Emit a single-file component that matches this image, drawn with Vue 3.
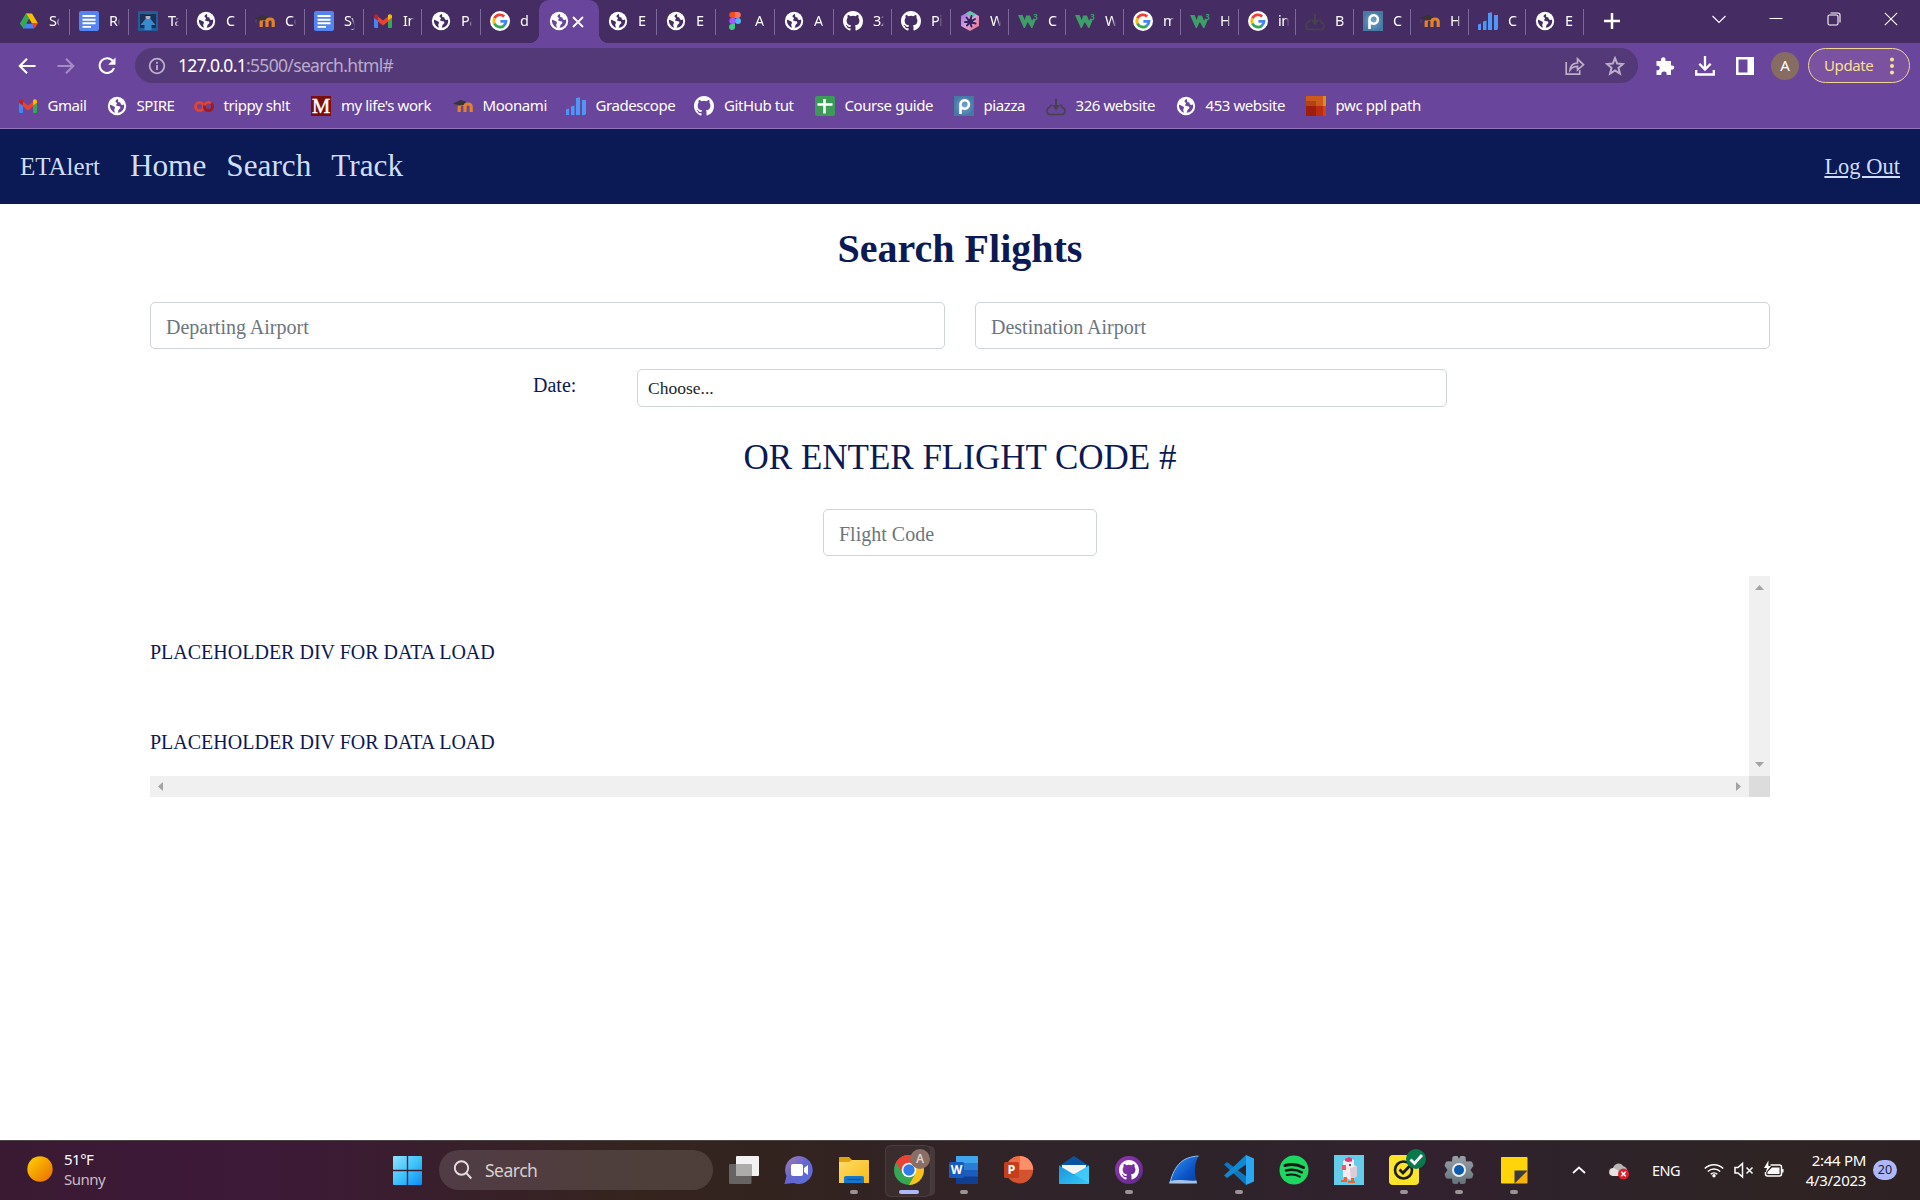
<script setup>
const tabs = [
  { icon: 'drive', text: 'Sc', w: 70 },
  { icon: 'docs', text: 'Re', w: 59 },
  { icon: 'tophat', text: 'Ta', w: 58 },
  { icon: 'globe', text: 'C', w: 59 },
  { icon: 'moodle', text: 'Co', w: 59 },
  { icon: 'docs', text: 'Sy', w: 59 },
  { icon: 'gmail', text: 'In', w: 58 },
  { icon: 'globe', text: 'Pa', w: 59 },
  { icon: 'google', text: 'd', w: 58, last: true },
  { icon: 'globe', active: true, w: 60 },
  { icon: 'globe', text: 'E', w: 58 },
  { icon: 'globe', text: 'E', w: 59 },
  { icon: 'figma', text: 'A', w: 59 },
  { icon: 'globe', text: 'A', w: 59 },
  { icon: 'github', text: '32', w: 58 },
  { icon: 'github', text: 'Pi', w: 59 },
  { icon: 'hexhub', text: 'W', w: 58 },
  { icon: 'w3', text: 'C', w: 57 },
  { icon: 'w3', text: 'W', w: 58 },
  { icon: 'google', text: 'm', w: 57 },
  { icon: 'w3', text: 'H', w: 58 },
  { icon: 'google', text: 'in', w: 57 },
  { icon: 'cloud', text: 'B', w: 58 },
  { icon: 'piazza', text: 'C', w: 57 },
  { icon: 'moodle', text: 'H', w: 58 },
  { icon: 'bars', text: 'C', w: 57 },
  { icon: 'globe', text: 'E', w: 58 },
]

const bookmarks = [
  { icon: 'gmail', text: 'Gmail', w: 89 },
  { icon: 'globe', text: 'SPIRE', w: 87 },
  { icon: 'colab', text: 'trippy sh!t', w: 117.5 },
  { icon: 'mass', text: "my life's work", w: 141.5 },
  { icon: 'moodle', text: 'Moonami', w: 113 },
  { icon: 'bars', text: 'Gradescope', w: 128.5 },
  { icon: 'github', text: 'GitHub tut', w: 120.5 },
  { icon: 'sheets', text: 'Course guide', w: 139 },
  { icon: 'piazza', text: 'piazza', w: 92 },
  { icon: 'cloud', text: '326 website', w: 130 },
  { icon: 'globe', text: '453 website', w: 130 },
  { icon: 'pwc', text: 'pwc ppl path', w: 130 },
]

const apps = [
  { icon: 'taskview' },
  { icon: 'chat' },
  { icon: 'folder', open: true },
  { icon: 'chrome', open: true, current: true },
  { icon: 'word', open: true },
  { icon: 'ppt' },
  { icon: 'mail' },
  { icon: 'ghdesktop', open: true },
  { icon: 'shark' },
  { icon: 'vscode', open: true },
  { icon: 'spotify' },
  { icon: 'chicken' },
  { icon: 'norton', open: true },
  { icon: 'gear', open: true },
  { icon: 'sticky', open: true },
]
</script>

<template>
  <div class="screen">
    <svg class="defs" width="0" height="0" aria-hidden="true">
      <defs>
        <linearGradient id="g-sun" x1="0" y1="0" x2="1" y2="1"><stop offset="0" stop-color="#ffd400" /><stop offset="1" stop-color="#ea6a00" /></linearGradient>
        <linearGradient id="g-win" x1="0" y1="0" x2="1" y2="1"><stop offset="0" stop-color="#8fe2ff" /><stop offset=".5" stop-color="#3fc4fb" /><stop offset="1" stop-color="#0a8cf5" /></linearGradient>
        <linearGradient id="g-chat" x1="0" y1="0" x2="1" y2="1"><stop offset="0" stop-color="#a67bb5" /><stop offset=".5" stop-color="#6466cf" /><stop offset="1" stop-color="#5a6fd6" /></linearGradient>
        <linearGradient id="g-folder" x1="0" y1="0" x2="1" y2="1"><stop offset="0" stop-color="#ffdc6a" /><stop offset="1" stop-color="#f9b914" /></linearGradient>
        <linearGradient id="g-mail" x1="0" y1="0" x2="1" y2="1"><stop offset="0" stop-color="#1b93e0" /><stop offset="1" stop-color="#35c8f6" /></linearGradient>
        <linearGradient id="g-shark" x1="0" y1="0" x2="1" y2="1"><stop offset="0" stop-color="#3f95f2" /><stop offset=".6" stop-color="#0c55c8" /><stop offset="1" stop-color="#0b3a94" /></linearGradient>
        <linearGradient id="g-hex" x1="0" y1="0" x2="1" y2="1"><stop offset="0" stop-color="#8c6be0" /><stop offset=".5" stop-color="#dca4dd" /><stop offset="1" stop-color="#ef6a7d" /></linearGradient>
        <linearGradient id="g-gear" x1="0" y1="0" x2="0" y2="1"><stop offset="0" stop-color="#98a1a8" /><stop offset="1" stop-color="#66717a" /></linearGradient>
        <linearGradient id="g-gh" x1="0" y1="0" x2="1" y2="1"><stop offset="0" stop-color="#9535b5" /><stop offset="1" stop-color="#5e2a88" /></linearGradient>
        <radialGradient id="g-piazza"><stop offset="0" stop-color="#73a6cb" /><stop offset="1" stop-color="#4879a5" /></radialGradient>

        <symbol id="drive" viewBox="0 0 20 20">
          <path fill="#34a853" d="M7 2.500h3v6L5 17.500 1 12.500z" />
          <path fill="#fbbc04" d="M7 2.500h6l6 10h-6z" />
          <path fill="#4285f4" d="M5 12.500h9L15 17.500H4z" />
          <path fill="#ea4335" d="M13 12.500h6L15.500 17.500z" />
          <path fill="#34a853" d="M7 2.500l3.200 5L4.500 17.500 1 12.500z" />
          <path fill="#452c63" d="M10 8l2.500 4.500h-5z" />
        </symbol>
        <symbol id="docs" viewBox="0 0 20 20">
          <rect width="20" height="20" rx="2" fill="#5384ef" />
          <path stroke="#fff" stroke-width="1.900" d="M3.500 5h13M3.500 8.700h13M3.500 12.300h13M3.500 15.900h8.500" />
        </symbol>
        <symbol id="tophat" viewBox="0 0 20 20">
          <rect width="20" height="20" rx="1" fill="#245c9c" />
          <path fill="#1d3157" d="M2 3h5v14H2zM13 3h5v14h-5z" />
          <path fill="#3a8bce" d="M7.500 8h5l5 6h-4v5h-7v-5h-4z" />
          <circle cx="10" cy="6" r="2.300" fill="#b8b6bd" />
          <path fill="#222" d="M7 3.500h6V5H7z" />
        </symbol>
        <symbol id="globe" viewBox="0 0 20 20">
          <circle cx="10" cy="10" r="9.200" fill="#fff" />
          <path fill="var(--tab, #452c63)" d="M10.800 2.900c-1.200.4-2.400 1.500-2.300 2.600.1 1 1.200.8 1.500 1.600.3.900-1.100 1.300-.7 2.300.4.900 1.900.4 2.900.8 1 .4 1.400 1.200 1 2-.4.900-1.600 1-1.800 2.100-.1.800-.3 1.600-.8 2.400 3.800-.2 6.600-3.300 6.600-6.800 0-.5-.1-.9-.2-1.400-.9.600-2.100.6-2.900 0-.8-.6-.2-1.500-.8-2.100-.5-.5-1.400.1-1.900-.5-.6-.8.200-2-.6-3zM3 8.800c1.400.1 2.800 1 4.200 1.700 1 .5.900 1.600.3 2.400-.6.800-.1 1.700.2 2.800l.2 1C4.800 15.700 2.500 12.200 3 8.800z" />
        </symbol>
        <symbol id="moodle" viewBox="0 0 20 20">
          <path fill="none" stroke="#e0832c" stroke-width="3.200" d="M6.200 16V10.500M6.200 11.500C6.200 9 8 8 9.400 8S12 9 12 11v5M12 11c0-2 1.600-3 3.200-3s3 1 3 3v5" />
          <path fill="#373339" d="M0 7.500L7.500 4 13 5.500 10.500 9 6 9.500z" />
          <path stroke="#555" stroke-width=".8" d="M1 8v4" />
        </symbol>
        <symbol id="gmail" viewBox="0 0 20 20">
          <path fill="#4285f4" d="M1 6.500l4 3V17H2.500C1.500 17 1 16.500 1 15.700z" />
          <path fill="#34a853" d="M15 9.500l4-3v9.200c0 .8-.5 1.300-1.500 1.300H15z" />
          <path fill="#ea4335" d="M4 4.800l6 4.700 6-4.700v5l-6 4.600-6-4.600z" />
          <path fill="#c5221f" d="M1 5.500C1 3 3.500 2.600 5 4v5.600L1 6.700z" />
          <path fill="#fbbc04" d="M19 5.500C19 3 16.500 2.600 15 4v5.600l4-2.900z" />
        </symbol>
        <symbol id="google" viewBox="0 0 20 20">
          <circle cx="10" cy="10" r="10" fill="#fff" />
          <g fill="none" stroke-width="2.800">
            <path stroke="#ea4335" d="M14.200 5.500A6.100 6.100 0 0 0 4.500 7.300" />
            <path stroke="#fbbc04" d="M4.600 7.100a6.100 6.100 0 0 0 0 5.800" />
            <path stroke="#34a853" d="M4.500 12.700a6.100 6.100 0 0 0 9.500 1.900" />
            <path stroke="#4285f4" d="M13.800 14.700A6 6 0 0 0 16 10.300h-5.600" />
          </g>
        </symbol>
        <symbol id="figma" viewBox="0 0 20 20">
          <path fill="#f24e1e" d="M10 1H7.200a3 3 0 0 0 0 6H10z" />
          <path fill="#ff7262" d="M10 1h2.800a3 3 0 0 1 0 6H10z" />
          <path fill="#a259ff" d="M10 7H7.200a3 3 0 0 0 0 6H10z" />
          <circle cx="13" cy="10" r="3" fill="#4fb5f7" />
          <path fill="#3ecf7e" d="M10 13H7.200a3 3 0 1 0 2.800 3z" />
        </symbol>
        <symbol id="github" viewBox="0 0 16 16">
          <path fill="#fff" d="M8 0C3.580 0 0 3.580 0 8c0 3.540 2.290 6.530 5.470 7.590.4.070.55-.17.55-.38 0-.19-.01-.82-.01-1.490-2.010.37-2.530-.49-2.690-.94-.09-.23-.48-.94-.82-1.130-.28-.15-.68-.52-.01-.53.63-.01 1.080.58 1.230.82.72 1.210 1.870.87 2.330.66.070-.52.28-.87.51-1.070-1.780-.2-3.640-.89-3.640-3.950 0-.87.31-1.590.82-2.150-.08-.2-.36-1.020.08-2.120 0 0 .67-.21 2.200.82a7.600 7.600 0 0 1 4 0c1.530-1.040 2.200-.82 2.200-.82.44 1.100.16 1.920.08 2.120.51.56.82 1.270.82 2.150 0 3.070-1.870 3.750-3.650 3.950.29.25.54.73.54 1.480 0 1.070-.01 1.930-.01 2.200 0 .21.15.46.55.38A8 8 0 0 0 16 8c0-4.420-3.580-8-8-8z" />
        </symbol>
        <symbol id="hexhub" viewBox="0 0 20 20">
          <path fill="url(#g-hex)" d="M10 0l9 5v10l-9 5-9-5V5z" />
          <path fill="#63c7b0" d="M10 0l6 3.300-3 3L6 2.300z" />
          <path stroke="#34235e" stroke-width="2" stroke-linecap="round" d="M10 11L6.500 6.500M10 10l1.500-5M10 11l5-3M10 11H5M10 11l5.500 1.500M10 11l-3 3.500M10 11l1.500 4.500" />
          <circle cx="10.300" cy="10.500" r="2.800" fill="#34235e" />
        </symbol>
        <symbol id="w3" viewBox="0 0 20 20">
          <path fill="#3f9d69" d="M0 4h4.500l2.300 5L8 4.500h4l2 5 1.800-2.300 1.700 2.300-3.200 7.500h-1L9.800 11l-3 6h-1z" />
          <text x="15.300" y="8.500" font-family="Open Sans, sans-serif" font-size="8" font-weight="700" fill="#3f9d69">3</text>
        </symbol>
        <symbol id="cloud" viewBox="0 0 20 20">
          <path fill="none" stroke="#47434c" stroke-width="1.600" d="M6 9c-2 0-2 1-2.200 2C-.3 12.500.3 18.300 4 18.500h12c4-.5 4-6 .2-7C16 9.500 15 9 14 9" />
          <path fill="none" stroke="#47434c" stroke-width="2" d="M10 3v10" />
          <path fill="#47434c" d="M6 9h8l-4 5.500z" />
        </symbol>
        <symbol id="piazza" viewBox="0 0 20 20">
          <rect width="20" height="20" fill="url(#g-piazza)" />
          <path fill="none" stroke="#fff" stroke-width="2.600" d="M6.500 18V8a4.200 4.200 0 1 1 4.300 4.700c-2 0-3-.7-4-1.700" />
        </symbol>
        <symbol id="bars" viewBox="0 0 20 20">
          <path fill="#4f96f6" d="M0 13.500l3-1V19H0zM5 10.500l3.500-1V19H5zM10 2l4-.8V19h-4zM16 4h4v13.500l-1 1.500h-3z" />
        </symbol>
        <symbol id="colab" viewBox="0 0 20 20">
          <circle cx="5.500" cy="10.500" r="4" fill="none" stroke="#de4333" stroke-width="3" />
          <circle cx="14.500" cy="10.500" r="4" fill="none" stroke="#a31a1b" stroke-width="3" />
          <path fill="none" stroke="#de4333" stroke-width="3" d="M10.500 9.500a4 4 0 0 1 6.500-2.200" />
        </symbol>
        <symbol id="mass" viewBox="0 0 20 20">
          <rect width="20" height="20" fill="#7c0d0c" />
          <text x="10" y="17" text-anchor="middle" font-family="Liberation Serif, serif" font-size="20.500" fill="#fff" stroke="#fff" stroke-width=".5">M</text>
        </symbol>
        <symbol id="sheets" viewBox="0 0 20 20">
          <rect width="20" height="20" rx="2" fill="#3c9c57" />
          <path stroke="#fff" stroke-width="2.600" d="M2.500 8.500h15M9.500 3v14.500" />
        </symbol>
        <symbol id="pwc" viewBox="0 0 20 20">
          <path fill="#cc5a18" d="M0 0h20v20H0z" />
          <path fill="#b34313" d="M0 5h10v5H0z" />
          <path fill="#9c1f0d" d="M0 10h10v10H0z" />
          <path fill="#bb2b10" d="M10 10h7v10h-7z" />
          <path fill="#dd8b22" d="M17 0h3v10h-3z" />
          <path fill="#cf4217" d="M17 10h3v10h-3z" />
        </symbol>

        <symbol id="taskview" viewBox="0 0 30 30">
          <rect x="7" y="1" width="23" height="20" rx="1" fill="#f2f2f2" />
          <rect x="0" y="9" width="22.500" height="20" rx="1" fill="#656463" />
          <rect x="7" y="9" width="15.500" height="12" fill="#adacab" />
        </symbol>
        <symbol id="chat" viewBox="0 0 30 30">
          <path fill="url(#g-chat)" d="M15 1a14 14 0 1 1-5.500 27L.5 29l2-8A14 14 0 0 1 15 1z" />
          <rect x="7" y="9" width="12" height="12" rx="2" fill="#fff" />
          <path fill="#fff" d="M20 13l4-3v10l-4-3z" />
        </symbol>
        <symbol id="folder" viewBox="0 0 30 30">
          <path fill="#e0a30c" d="M0 3c0-.7.300-1 1-1h9l3 3v5H0z" />
          <path fill="url(#g-folder)" d="M0 7h10l3-2h16c.6 0 1 .4 1 1v22H0z" />
          <path fill="#1377cb" d="M5 28v-5c0-1.200.8-2 2-2h16c1.200 0 2 .8 2 2v5z" />
          <path stroke="#0b4d93" stroke-width="1.200" d="M8.500 24.500h13" />
        </symbol>
        <symbol id="chrome" viewBox="0 0 30 30">
          <circle cx="15" cy="15" r="15" fill="#34a853" />
          <path fill="#ea4335" d="M15 15L2 7.500A15 15 0 0 1 28 7.500z" />
          <path fill="#ea4335" d="M2 7.500L8.500 18.700 15 8h13A15 15 0 0 0 2 7.500z" />
          <path fill="#fbc116" d="M15 8h13.200A15 15 0 0 1 15 30l6.500-11.500z" />
          <circle cx="15" cy="15" r="7.300" fill="#fff" />
          <circle cx="15" cy="15" r="5.700" fill="#2f7de9" />
        </symbol>
        <symbol id="word" viewBox="0 0 30 30">
          <rect x="7" y="1" width="22" height="27.500" rx="1" fill="#1a5dbe" />
          <path fill="#41a5ee" d="M7 8V2c0-.6.400-1 1-1h20c.6 0 1 .4 1 1v6z" />
          <path fill="#2b7cd3" d="M7 8h22v7H7z" />
          <path fill="#103f91" d="M7 21.500h22v7H7z" />
          <rect y="7" width="15" height="16" rx="1.500" fill="#185abd" />
          <text x="7.500" y="19.300" text-anchor="middle" font-family="Open Sans, sans-serif" font-weight="700" font-size="12" fill="#fff">W</text>
        </symbol>
        <symbol id="ppt" viewBox="0 0 30 30">
          <circle cx="15.500" cy="14.700" r="13.700" fill="#d35230" />
          <path fill="#ff8f6b" d="M15.500 14.700V1a13.700 13.700 0 0 1 13.700 13.700z" />
          <path fill="#ed6c47" d="M15.500 14.700V1A13.700 13.700 0 0 0 1.800 14.700z" />
          <rect y="7" width="15" height="16" rx="1.500" fill="#c43e1c" />
          <text x="7.500" y="19.300" text-anchor="middle" font-family="Open Sans, sans-serif" font-weight="700" font-size="12.500" fill="#fff">P</text>
        </symbol>
        <symbol id="mail" viewBox="0 0 30 30">
          <path fill="#0a55a2" d="M0 11L15 1l15 10v6H0z" />
          <path fill="#f4f4f4" d="M3 10h24v9H3z" />
          <path fill="url(#g-mail)" d="M0 10.500l15 9 15-9V28c0 .6-.4 1-1 1H1c-.6 0-1-.4-1-1z" />
          <path fill="#47d2f8" d="M15 19.500l15-9V28z" opacity=".7" />
        </symbol>
        <symbol id="ghdesktop" viewBox="0 0 30 30">
          <circle cx="15" cy="15" r="14" fill="url(#g-gh)" />
          <use href="#github" x="5" y="5" width="20" height="20" />
        </symbol>
        <symbol id="shark" viewBox="0 0 30 30">
          <path fill="url(#g-shark)" d="M29.500 1C14 2 6 9 1 27.500c6 1.500 20 1.500 27 0C25 18 25 9 29.500 1z" />
          <path fill="none" stroke="#8ec0f2" stroke-width="1" d="M29.500 1C14 2 6 9 1 27.500" />
          <path fill="#a7c4e6" d="M1 26c9-2.500 17 .5 26.500-.5l.5 3H0z" />
        </symbol>
        <symbol id="vscode" viewBox="0 0 30 30">
          <path fill="#0b78c1" d="M0 9.500l3-2.500 20 15-1 8z" />
          <path fill="#1188cf" d="M0 20.500L22 0l2 8L3 23z" />
          <path fill="#29a7f3" d="M22 0l8 3.500v23L22 30z" />
        </symbol>
        <symbol id="spotify" viewBox="0 0 30 30">
          <circle cx="15" cy="15" r="14.500" fill="#1ed760" />
          <g fill="none" stroke="#131a15" stroke-linecap="round">
            <path stroke-width="3" d="M6 10.500c6-1.700 13-1 18.500 2" />
            <path stroke-width="2.500" d="M7 15.500c5.500-1.400 11-.8 15.800 1.800" />
            <path stroke-width="2" d="M7.800 20c4.500-1 9-.6 13 1.700" />
          </g>
        </symbol>
        <symbol id="chicken" viewBox="0 0 30 30">
          <rect width="30" height="30" fill="#64cdea" />
          <path fill="#f6e9ef" d="M9 6l5-3 6 2v5l3 2v9l-6 4-8-3z" />
          <path fill="#dccbd9" d="M16 13l7-2v10l-6 4z" />
          <path fill="#e63a77" d="M11 4l4-2 3 1.500v3L14 7l-3-1z" />
          <path fill="#ec5a6b" d="M8 10h4v5H8z" />
          <path fill="#e9652f" d="M10 22h3v3h-3zM17 23h3v3h-3zM7 25h6v2H7zM14 26h7v2h-7z" />
          <circle cx="16" cy="10" r="1" fill="#272027" />
        </symbol>
        <symbol id="norton" viewBox="0 0 30 30">
          <rect width="30" height="30" rx="4" fill="#fde428" />
          <circle cx="14.500" cy="15" r="8.500" fill="none" stroke="#1b1b17" stroke-width="2.600" />
          <path fill="none" stroke="#1b1b17" stroke-width="2.800" d="M10.500 14.500l3.500 3.500 8-8.500" />
        </symbol>
        <symbol id="gear" viewBox="0 0 30 30">
          <path fill="url(#g-gear)" d="M10.500 1h3l1.500 2.800L16.500 1h3l2 .8.500 4.700 3.500-.2L28 6.800l1.500 4L26.500 15l3 4.200-1.500 4-2.500.5-3.500-.2-.5 4.700-2 .8h-3L15 26.200 13.500 29h-3l-2-.8L8 23.500l-3.500.2L2 23.200l-1.500-4L3.500 15l-3-4.200 1.500-4 2.500-.5L8 6.500l.5-4.700z" />
          <circle cx="15" cy="15" r="7" fill="#e9eef1" />
          <circle cx="15" cy="15" r="5" fill="#0b5cad" />
        </symbol>
        <symbol id="sticky" viewBox="0 0 30 30">
          <path fill="#ffd50a" d="M2 3c0-.6.400-1 1-1h24.500c.6 0 1 .4 1 1v12.500L15.500 28.500H3c-.6 0-1-.4-1-1z" />
          <path fill="#f5b20a" d="M28.500 15.500v12c0 .6-.4 1-1 1h-12z" />
          <path fill="#3c3b42" d="M15.500 15.500h13l-13 13z" />
        </symbol>
      </defs>
    </svg>

    <header class="browser">
      <div class="tabstrip">
        <div v-for="(t, i) in tabs" :key="i" class="tab" :class="{ active: t.active, bare: t.last }" :style="{ width: t.w + 'px' }">
          <svg class="fav"><use :href="'#' + t.icon" /></svg>
          <svg v-if="t.active" class="tab-close" viewBox="0 0 12 12"><path d="M1 1l10 10M11 1L1 11" /></svg>
          <span v-else class="tab-text">{{ t.text }}</span>
        </div>
        <svg class="plus" viewBox="0 0 16 16"><path d="M8 0v16M0 8h16" /></svg>
        <div class="win-controls">
          <svg viewBox="0 0 14 14"><path d="M.500 4l6.500 6.500L13.500 4" /></svg>
          <svg viewBox="0 0 14 14"><path d="M.500 6.500h13" /></svg>
          <svg viewBox="0 0 14 14"><rect x="1" y="3" width="10" height="10" rx="1.500" /><path d="M3.500 1H11q2 0 2 2v7.500" /></svg>
          <svg viewBox="0 0 14 14"><path d="M.800.800l12.400 12.400M13.200.800L.800 13.200" /></svg>
        </div>
      </div>

      <div class="toolbar">
        <svg class="nav-ico" viewBox="0 0 20 20"><path d="M18.500 10H3.500M10 2.700L2.800 10l7.200 7.300" /></svg>
        <svg class="nav-ico dim" viewBox="0 0 20 20"><path d="M1.500 10h15M10 2.700l7.200 7.300-7.200 7.300" /></svg>
        <svg class="nav-ico reload" viewBox="0 0 20 20"><path d="M16 5.200A7.400 7.400 0 1 0 17 12.200" /><path class="fill" d="M18.500 1.500v7.300h-7.300z" /></svg>
        <div class="omnibox">
          <svg class="info" viewBox="0 0 18 18"><circle cx="9" cy="9" r="7.300" /><path d="M9 8v5M9 4.800v2" /></svg>
          <span class="url"><b>127.0.0.1</b>:5500/search.html#</span>
          <svg class="share" viewBox="0 0 20 20"><path d="M1.200 6v12.200h13.500v-4M5 14c.5-4.500 3-6.800 7.500-7V2.800l6 6-6 5.200v-3.600c-3.500 0-5.500 1-7.500 3.600z" /></svg>
          <svg class="star" viewBox="0 0 20 20"><path d="M10 2.200l2.200 5.400 5.700.4-4.400 3.800 1.400 5.700-4.900-3.100-4.900 3.100 1.400-5.700L2.100 8l5.700-.4z" /></svg>
        </div>
        <div class="actions">
          <svg viewBox="0 0 20 20"><path fill="#fff" d="M1.500 5h4.700C5.600 2.600 6.600 1.200 8.300 1.200S11 2.600 10.400 5H16v4.600c2-.5 3.300.5 3.300 2s-1.300 2.600-3.300 2V19h-4.300c.4-2.300-.8-3.400-2.600-3.400S6 16.700 6.300 19H1.500v-4.800c2 .3 3.200-.7 3.200-2.300S3.500 9.500 1.500 9.800z" /></svg>
          <svg viewBox="0 0 20 20"><path fill="none" stroke="#fff" stroke-width="2.300" d="M10 0v13M4.300 7.700l5.700 5.800 5.700-5.800M1.200 14v4.500h17.600V14" /></svg>
          <svg viewBox="0 0 20 20"><path fill="#fff" fill-rule="evenodd" d="M1 1h18v18H1zM3.500 3.500v13h9v-13z" /></svg>
        </div>
        <div class="avatar">A</div>
        <div class="update"><span>Update</span><i></i></div>
      </div>

      <div class="bookmarks">
        <div v-for="b in bookmarks" :key="b.text" class="bookmark" :style="{ width: b.w + 'px' }">
          <svg><use :href="'#' + b.icon" /></svg><span>{{ b.text }}</span>
        </div>
      </div>
    </header>

    <nav class="site-nav">
      <a class="brand">ETAlert</a>
      <a class="link">Home</a>
      <a class="link">Search</a>
      <a class="link">Track</a>
      <a class="logout">Log Out</a>
    </nav>

    <main class="page">
      <h1>Search Flights</h1>
      <div class="row">
        <input type="text" placeholder="Departing Airport" />
        <input type="text" placeholder="Destination Airport" />
      </div>
      <div class="date-row">
        <label>Date:</label>
        <div class="select">Choose...</div>
      </div>
      <h2>OR ENTER FLIGHT CODE #</h2>
      <input class="code" type="text" placeholder="Flight Code" />
      <div class="scroller">
        <div class="results">
          <p>PLACEHOLDER DIV FOR DATA LOAD</p>
          <p>PLACEHOLDER DIV FOR DATA LOAD</p>
        </div>
        <div class="vbar">
          <svg width="9" height="5"><path d="M4.500 0L9 5H0z" /></svg>
          <svg width="9" height="5"><path d="M0 0h9L4.500 5z" /></svg>
        </div>
        <div class="hbar">
          <svg width="5" height="9"><path d="M5 0v9L0 4.500z" /></svg>
          <svg width="5" height="9"><path d="M0 0l5 4.500L0 9z" /></svg>
        </div>
        <div class="corner"></div>
      </div>
    </main>

    <footer class="taskbar">
      <div class="weather">
        <svg width="26" height="26" viewBox="0 0 26 26"><circle cx="13" cy="13" r="12.700" fill="url(#g-sun)" /></svg>
        <div><p class="temp">51°F</p><p class="sky">Sunny</p></div>
      </div>
      <svg class="start" viewBox="0 0 30 30"><path fill="url(#g-win)" d="M1 0h13.300v14.300H0V1q0-1 1-1zM15.700 0H29q1 0 1 1v13.300H15.700zM0 15.700h14.300V30H1q-1 0-1-1zM15.700 15.700H30V29q0 1-1 1H15.700z" /></svg>
      <div class="searchbox">
        <svg viewBox="0 0 20 20"><circle cx="8.500" cy="8" r="6.700" /><path d="M13.300 13l5 5.500" /></svg>
        <span>Search</span>
      </div>
      <div class="apps">
        <div v-for="a in apps" :key="a.icon" class="app" :class="{ current: a.current }">
          <svg><use :href="'#' + a.icon" /></svg>
          <span v-if="a.icon === 'chrome'" class="badge profile">A</span>
          <span v-if="a.icon === 'norton'" class="badge ok"><svg viewBox="0 0 20 20"><path d="M4.500 10.500l4 4 7.500-8.500" /></svg></span>
          <i v-if="a.open"></i>
        </div>
      </div>
      <div class="tray">
        <svg class="t-chev" viewBox="0 0 14 8"><path d="M1 7l6-5.500L13 7" /></svg>
        <svg class="t-cloud" viewBox="0 0 20 18">
          <path fill="#b9b6b6" d="M4 14a4 4 0 0 1 0-8c1-4 7-6.500 10-2 3 1 5 3 4 7l-3 3z" />
          <path fill="#e6e3e3" d="M1 12c-1-3 1-6 4-6l8 5-5 3H4z" />
          <circle cx="14.500" cy="12" r="5.500" fill="#e01f2b" /><path stroke="#fff" stroke-width="1.500" d="M12.300 9.800l4.400 4.400M16.700 9.800l-4.400 4.400" />
        </svg>
        <span class="lang">ENG</span>
        <svg class="t-ico wifi" viewBox="0 0 20 20"><path d="M.800 8.500a13.200 13.200 0 0 1 18.400 0M3.800 11.500a9 9 0 0 1 12.400 0M6.700 14.200a4.800 4.800 0 0 1 6.600 0" /><circle cx="10" cy="15.800" r="1.700" fill="#fff" stroke="none" /></svg>
        <svg class="t-ico" viewBox="0 0 20 20"><path d="M1 7.500h3L8.500 3.500v13.500L4 13H1zM12.500 7.500l6 6M18.500 7.500l-6 6" /></svg>
        <svg class="t-ico bat" viewBox="0 0 20 20"><path d="M6.500 5h9q2 0 2 2v7q0 2-2 2h-12q-2 0-2-2v-2M18.800 9v3.500" /><path fill="#fff" stroke="none" d="M8 7.500h7.500v6.500h-12v-2zM4.500.500L0 8h3L1.500 13 7 6H4.300z" /></svg>
        <div class="clock"><p>2:44 PM</p><p>4/3/2023</p></div>
        <span class="count">20</span>
      </div>
    </footer>
  </div>
</template>

<style>
body { margin: 0; background: #fff; }
</style>

<style scoped>
* { box-sizing: border-box; }
p, h1, h2 { margin: 0; }
svg { display: block; flex: none; }
.screen { width: 1920px; height: 1200px; display: flex; flex-direction: column; overflow: hidden; background: #fff; font-family: "Noto Sans", "Open Sans", sans-serif; }
.defs { position: absolute; }

.browser { height: 129px; background: #6a459c; border-bottom: 1px solid #9277b8; color: #fff; flex: none; }
.tabstrip { height: 43px; background: #452c63; display: flex; align-items: flex-start; }
.tab { height: 43px; display: flex; align-items: center; padding-left: 9px; position: relative; flex: none; }
.tab::after { content: ""; position: absolute; right: 0; top: 9px; width: 1px; height: 26px; background: #7c689a; }
.tab:first-child { padding-left: 19px; }
.tab.bare::after, .tab.active::after { display: none; }
.fav { width: 20px; height: 20px; margin-top: -1px; }
.tab-text { margin: -3px 0 0 10px; width: 11px; overflow: hidden; white-space: nowrap; font-size: 14.500px; letter-spacing: -.5px; line-height: 22px; mask-image: linear-gradient(90deg, #000 65%, transparent); }
.tab.active { --tab: #6a459c; background: #6a459c; border-radius: 10px 10px 0 0; padding-left: 10px; }
.tab.active::before { content: ""; position: absolute; left: -10px; right: -10px; bottom: 0; height: 10px; background: radial-gradient(circle at 0 0, transparent 10px, #6a459c 10.500px) left / 10px 10px no-repeat, radial-gradient(circle at 100% 0, transparent 10px, #6a459c 10.500px) right / 10px 10px no-repeat; }
.tab-close { width: 12px; height: 12px; margin-left: 3px; fill: none; stroke: #fff; stroke-width: 1.800; }
.plus { width: 16px; height: 16px; margin: 13px 0 0 20px; stroke: #fff; stroke-width: 2.500; }
.win-controls { margin: 12px 22px 0 auto; display: flex; gap: 43.300px; }
.win-controls svg { width: 14px; height: 14px; fill: none; stroke: #fff; stroke-width: 1.100; }

.toolbar { height: 43px; display: flex; align-items: center; padding: 2px 10px 0 17px; }
.nav-ico { width: 20px; height: 20px; margin-right: 19px; fill: none; stroke: #fff; stroke-width: 2.100; }
.nav-ico.dim { stroke: #a48cc5; }
.nav-ico.reload { margin: 0 18px 0 2px; }
.nav-ico .fill { fill: #fff; stroke: none; }
.omnibox { width: 1503px; height: 35px; border-radius: 18px; background: #543979; display: flex; align-items: center; padding: 0 13px 0 13px; }
.info { width: 18px; height: 18px; fill: none; stroke: #bcb0c9; stroke-width: 1.800; }
.url { margin-left: 12px; font-size: 17.500px; letter-spacing: -.68px; line-height: 24px; color: #b9acc8; margin-top: -1px; }
.url b { font-weight: 400; color: #fff; }
.share, .star { width: 20px; height: 20px; fill: none; stroke: #bcb0c9; stroke-width: 1.700; }
.share { margin-left: auto; }
.star { margin-left: 20px; stroke-width: 2; }
.actions { display: flex; gap: 20px; margin-left: 17px; }
.actions svg { width: 20px; height: 20px; }
.avatar { width: 28px; height: 28px; border-radius: 50%; background: #876c61; font-size: 15px; line-height: 27px; text-align: center; margin-left: 16px; }
.update { margin-left: auto; width: 102px; height: 35px; border: 1.500px solid #f1d594; border-radius: 18px; background: #7a529f; color: #fbdf96; font-size: 15px; letter-spacing: -.4px; display: flex; align-items: center; padding: 0 15px; justify-content: space-between; }
.update span { margin-top: -2px; }
.update i { width: 4px; height: 4px; border-radius: 50%; background: #fbdf96; box-shadow: 0 -6.500px #fbdf96, 0 6.500px #fbdf96; }

.bookmarks { height: 40px; display: flex; align-items: center; padding-left: 17.500px; --tab: #6a459c; }
.bookmark { display: flex; align-items: center; gap: 10px; flex: none; font-size: 15px; letter-spacing: -.42px; white-space: nowrap; line-height: 22px; }
.bookmark svg { width: 20px; height: 20px; }
.bookmark span { margin-top: -2px; }

.site-nav { height: 75px; flex: none; background: #0b1954; color: #cfdef8; display: flex; align-items: center; padding: 0 20px; font-family: "Liberation Serif", serif; }
.brand { font-size: 25px; margin: 0 30px 0 0; }
.link { font-size: 31.250px; margin-right: 20px; margin-top: -2px; }
.logout { margin-left: auto; font-size: 22.500px; text-decoration: underline; }

.page { flex: 1; width: 1620px; margin: 0 auto; padding-top: 21px; display: flex; flex-direction: column; align-items: center; color: #0b1954; font-family: "Liberation Serif", serif; font-size: 20px; line-height: 30px; }
h1 { font-size: 40px; line-height: 48px; font-weight: 700; }
.row { display: flex; gap: 30px; width: 100%; margin-top: 29px; }
input { height: 47px; border: 1px solid #ced4da; border-radius: 5px; background: #fff; padding: 3px 15px 0; font: 20px "Liberation Serif", serif; flex: 1; min-width: 0; outline: none; }
input::placeholder { color: #6c757d; opacity: 1; }
.date-row { display: flex; align-self: flex-start; margin: 20px 0 0 383px; height: 38px; }
label { width: 104px; padding-top: 1px; }
.select { width: 810px; height: 38px; border: 1px solid #ced4da; border-radius: 5px; color: #212529; font-size: 17.500px; line-height: 36px; padding-left: 10px; }
h2 { font-size: 35px; font-weight: 400; line-height: 42px; margin: 30px 0 30px; }
.code { width: 274px; flex: none; }
.scroller { margin-top: 20px; width: 100%; display: grid; grid-template: 200px 21px / 1fr 21px; }
.results { padding-top: 1px; }
.results p { padding-top: 60px; }
.vbar, .hbar { background: #f0f0f0; display: flex; justify-content: space-between; align-items: center; fill: #a3a3a3; }
.vbar { flex-direction: column; padding: 9px 0; }
.hbar { padding: 0 8px; }
.corner { background: #dcdcdc; }

.taskbar { height: 60px; flex: none; display: flex; align-items: center; color: #fff; border-top: 1px solid #4b4445; background: linear-gradient(90deg, #3a1a32 0, #3d1938 180px, #3c1a35 320px, #38202a 460px, #35241e 640px, #33231f 760px, #30232a 1050px, #2f232b 1250px, #32212f 1420px, #2d2329 1600px, #2f2323 1780px, #2d2123 1920px); }
.weather { display: flex; align-items: center; width: 393px; padding-left: 27px; gap: 11px; font-size: 15px; line-height: 20px; letter-spacing: -.5px; margin-top: -3px; }
.sky { color: #c9bcc6; }
.start { width: 29px; height: 29px; }
.searchbox { width: 274px; height: 40px; border-radius: 20px; margin: -1px 0 0 17px; background: #ffffff20; display: flex; align-items: center; padding-left: 14px; gap: 12px; font-size: 17.500px; color: #d6d0cd; letter-spacing: -.5px; }
.searchbox svg { width: 20px; height: 20px; fill: none; stroke: #e4dfdd; stroke-width: 1.900; }
.apps { display: flex; margin: -1px 0 0 3.500px; }
.app { width: 55px; height: 50px; position: relative; display: flex; align-items: center; justify-content: center; }
.app > svg { width: 30px; height: 30px; }
.app > i { position: absolute; bottom: 1px; left: 23.500px; width: 8px; height: 4px; border-radius: 2px; background: #9b9395; }
.app.current::before { content: ""; position: absolute; left: 3px; top: 0; width: 44px; height: 50px; border: 1px solid #ffffff14; border-radius: 6px; background: #ffffff0c; box-shadow: 5px 0 0 -1px #46393a; clip-path: inset(0 -8px 0 0); }
.app.current > svg { position: relative; }
.app.current > i { width: 20px; left: 17.500px; background: #aeb7f8; }
.badge { position: absolute; left: 28.500px; top: 4px; width: 20px; height: 20px; border-radius: 50%; text-align: center; line-height: 20px; font-size: 12px; font-weight: 600; }
.profile { background: #8a6e65; color: #ddd0ca; }
.ok { background: #08794a; left: 29px; }
.ok svg { width: 20px; height: 20px; fill: none; stroke: #fff; stroke-width: 2.800; }
.tray { margin: -2px 23px 0 auto; display: flex; align-items: center; }
.t-chev { width: 14px; height: 8px; fill: none; stroke: #fff; stroke-width: 1.800; }
.t-cloud { width: 20px; height: 18px; margin: 2px 0 0 23px; }
.lang { width: 30px; margin-left: 23px; font-size: 14.500px; letter-spacing: -.5px; }
.t-ico { width: 20px; height: 20px; margin-left: 10px; fill: none; stroke: #fff; stroke-width: 1.500; }
.wifi { margin-left: 22px; }
.clock { width: 82px; text-align: right; font-size: 15px; line-height: 20px; letter-spacing: -.3px; }
.count { width: 24px; height: 20px; border-radius: 10px; background: #aeb7f8; color: #20203a; font-size: 12.500px; line-height: 19px; text-align: center; margin-left: 7px; }
</style>
